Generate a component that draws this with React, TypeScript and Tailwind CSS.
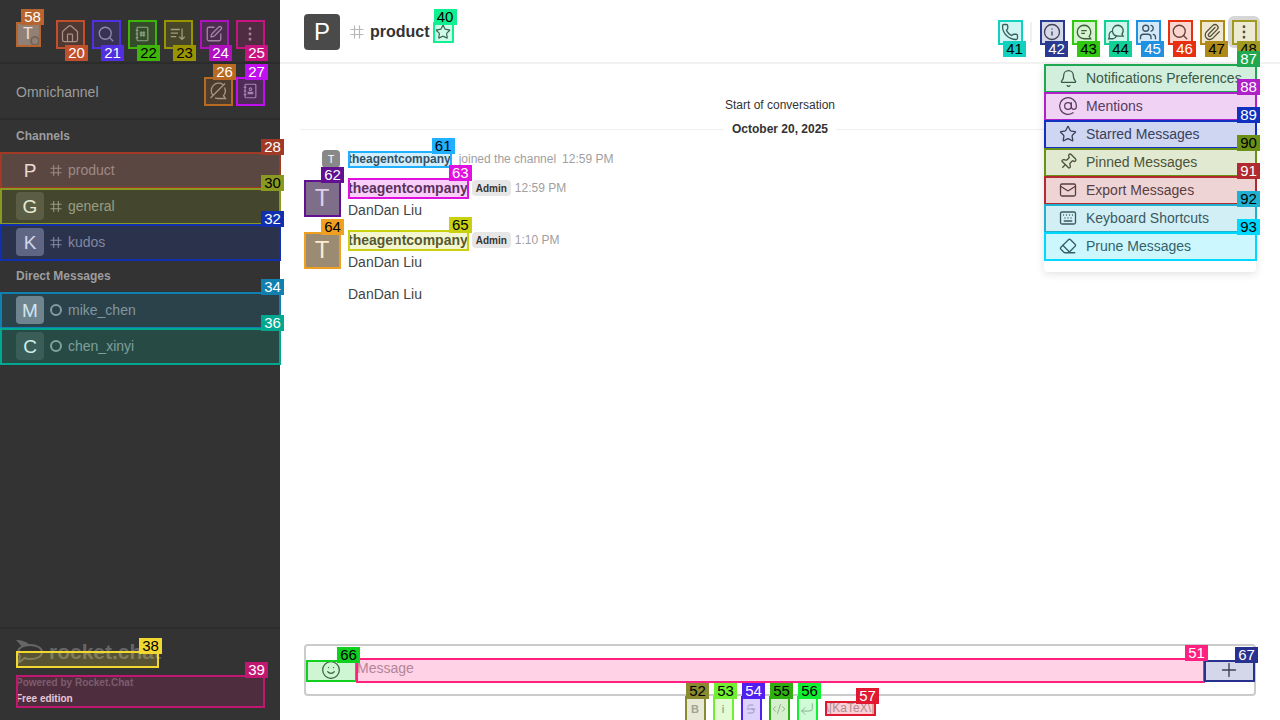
import type { ReactNode } from "react";
import {
  AtSign,
  Bell,
  CodeXml,
  CornerDownLeft,
  EllipsisVertical,
  Eraser,
  House,
  Info,
  Keyboard,
  Mail,
  Paperclip,
  Phone,
  Pin,
  Plus,
  Search,
  Smile,
  SquarePen,
  Star,
  Strikethrough,
  Users,
} from "lucide-react";

// numbered outline that sits over an element, label at its top right corner
function Mark({ n, color, dark, below }: { n: number; color: string; dark?: boolean; below?: boolean }) {
  return (
    <>
      <span
        className="absolute left-0 top-0 -right-px -bottom-px border-2 pointer-events-none"
        style={{ borderColor: color, backgroundColor: color + "33" }}
      />
      <span
        className={
          "absolute -right-[4px] z-30 h-4 w-[23px] text-center text-[15px] font-normal leading-4 " +
          (below ? "top-full -mt-[3px] " : "-top-[13px] ") +
          (dark ? "text-black" : "text-white")
        }
        style={{ backgroundColor: color }}
      >
        {n}
      </span>
    </>
  );
}

const thin = { size: 18, strokeWidth: 1.75 };
const wide = { size: 20, strokeWidth: 1.5 };

function NotebookHash({ contact }: { contact?: boolean }) {
  return (
    <svg width="18" height="18" viewBox="0 0 20 20" fill="none" stroke="currentColor" strokeWidth="1.3">
      <rect x="4.5" y="2.500" width="12" height="15" rx="1" />
      <path d="M3 6h3M3 10h3M3 14h3" />
      {contact ? (
        <>
          <circle cx="10.500" cy="8" r="1.400" />
          <path d="M8 13v-1.500h5V13z" />
        </>
      ) : (
        <path d="M9 7v6M12 7v6M7.500 8.700h6M7.500 11.300h6" />
      )}
    </svg>
  );
}

function SortDown() {
  return (
    <svg width="18" height="18" viewBox="0 0 20 20" fill="none" stroke="currentColor" strokeWidth="1.4">
      <path d="M2 5h10M2 9h8M2 13h6M14.500 4v12M11.500 13l3 3 3-3" />
    </svg>
  );
}

function OmniOff() {
  return (
    <svg width="20" height="20" viewBox="0 0 20 20" fill="none" stroke="currentColor" strokeWidth="1.3">
      <path d="M5 14.500A7.500 7.500 0 0 1 15 3.500M16.500 6.500a7.500 7.500 0 0 1-1 8.200l2 2.800H10a7 7 0 0 1-3-.7M17 2.500 2.500 17" />
    </svg>
  );
}

function Threads() {
  return (
    <svg width="18" height="18" viewBox="0 0 20 20" fill="none" stroke="currentColor" strokeWidth="1.4">
      <path d="M10 2.500a7.500 7.500 0 1 0 0 15h7.500l-1.800-2.700A7.500 7.500 0 0 0 10 2.500z" />
      <path d="M7 8.500h6M7 11.500h4" />
    </svg>
  );
}

function Discussion() {
  return (
    <svg width="18" height="18" viewBox="0 0 20 20" fill="none" stroke="currentColor" strokeWidth="1.4">
      <path d="M12 2.500a6 6 0 0 0-5.800 7.500 6 6 0 0 0 5.800 4.500h6l-1.400-2.200A6 6 0 0 0 12 2.500z" />
      <path d="M6 9a4.500 4.500 0 0 0-3.300 6.300L1.800 17.500H7a4.500 4.500 0 0 0 3.500-3" />
    </svg>
  );
}

function Logo() {
  return (
    <div className="flex h-[25px] items-start gap-[6px] text-[#666666]">
      <svg width="27" height="25" viewBox="0 0 27 25" fill="none" stroke="currentColor" strokeWidth="2">
        <path fill="currentColor" stroke="none" d="M0 0c6 0 11 2 14 5L6 7C4 4 2 2 0 0z" />
        <path d="M14 5c7 0 12 3 12 7 0 4.500-5 7-12 7-2 0-4-.3-5.500-1-2 2-4.500 4-7 5 1.500-2 2.500-4.500 2.300-7C2.500 15 2 13.500 2 12c0-4 5-7 12-7z" />
        <path strokeWidth="1.5" d="M9 12h1M13.500 12h1M18 12h1" />
      </svg>
      <span className="-mt-[1px] text-[21px] font-bold leading-[25px]">rocket.chat</span>
    </div>
  );
}

function SideIcon({ n, color, dark, children, below }: { n: number; color: string; dark?: boolean; below?: boolean; children: ReactNode }) {
  return (
    <div className="relative flex h-7 w-7 items-center justify-center text-[#a0a0a0]">
      {children}
      <Mark n={n} color={color} dark={dark} below={below} />
    </div>
  );
}

function SideRow({
  n,
  color,
  dark,
  letter,
  avatar,
  name,
  dm,
  selected,
}: {
  n: number;
  color: string;
  dark?: boolean;
  letter: string;
  avatar: string;
  name: string;
  dm?: boolean;
  selected?: boolean;
}) {
  return (
    <div className={"relative flex h-9 items-center px-4 " + (selected ? "bg-[#4a4a4a]" : "")}>
      <div
        className="flex h-7 w-7 items-center justify-center rounded text-[19px] leading-none text-white"
        style={{ backgroundColor: avatar }}
      >
        {letter}
      </div>
      <div className="ml-[6px] flex w-[12px] items-center justify-center text-[#a0a0a0]">
        {dm ? (
          <span className="h-3 w-3 rounded-full border-2 border-[#a0a0a0]" />
        ) : (
          <svg width="13" height="13" viewBox="0 0 13 13" fill="none" stroke="currentColor" strokeWidth="1.1">
            <path d="M4 .5v12M9 .5v12M.5 4h12M.5 9h12" />
          </svg>
        )}
      </div>
      <span className="ml-[6px] text-sm text-[#9d9d9d]">{name}</span>
      <Mark n={n} color={color} dark={dark} />
    </div>
  );
}

function Sidebar() {
  return (
    <aside className="relative z-10 flex h-full w-[280px] shrink-0 flex-col bg-[#333333]">
      <div className="flex h-[64px] shrink-0 items-start justify-between border-b-2 border-[#2b2b2b] pl-4 pr-4 pt-[20px]">
        <div className="relative mt-[2px] flex h-6 w-6 items-center justify-center rounded-sm bg-[#888888] text-[16px] leading-none text-white">
          T
          <span className="absolute bottom-0 right-0 h-[10px] w-[10px] rounded-full border-2 border-[#666666]" />
          <Mark n={58} color="#b8642e" />
        </div>
        <div className="flex gap-2">
          <SideIcon n={20} color="#c0502c" below>
            <House {...wide} />
          </SideIcon>
          <SideIcon n={21} color="#5030e0" below>
            <Search {...thin} />
          </SideIcon>
          <SideIcon n={22} color="#3fb50a" dark below>
            <NotebookHash />
          </SideIcon>
          <SideIcon n={23} color="#999400" dark below>
            <SortDown />
          </SideIcon>
          <SideIcon n={24} color="#b010c0" below>
            <SquarePen {...thin} />
          </SideIcon>
          <SideIcon n={25} color="#c81480" below>
            <EllipsisVertical {...thin} />
          </SideIcon>
        </div>
      </div>

      <div className="flex h-[56px] shrink-0 items-center justify-between border-b-2 border-[#2b2b2b] px-4">
        <span className="mt-[2px] text-sm text-[#9d9d9d]">Omnichannel</span>
        <div className="flex gap-1">
          <SideIcon n={26} color="#b86a20">
            <OmniOff />
          </SideIcon>
          <SideIcon n={27} color="#c010f0">
            <NotebookHash contact />
          </SideIcon>
        </div>
      </div>

      <div className="flex h-8 shrink-0 items-center px-4 text-xs font-bold text-[#9d9d9d]">Channels</div>
      <SideRow n={28} color="#a03a25" letter="P" avatar="#4a4a4a" name="product" selected />
      <SideRow n={30} color="#8a9a20" dark letter="G" avatar="#4f4f4f" name="general" />
      <SideRow n={32} color="#1030b0" letter="K" avatar="#737379" name="kudos" />
      <div className="flex h-8 shrink-0 items-center px-4 text-xs font-bold text-[#9d9d9d]">Direct Messages</div>
      <SideRow n={34} color="#1080b0" letter="M" avatar="#868688" name="mike_chen" dm />
      <SideRow n={36} color="#00a890" letter="C" avatar="#4a4a4a" name="chen_xinyi" dm />

      <div className="mt-auto h-[93px] shrink-0 border-t-2 border-[#2b2b2b] px-4 pt-[11px]">
        <Logo />
        <div className="relative -mt-[14px] h-4 w-[142px]">
          <Mark n={38} color="#f0d830" dark />
        </div>
        <div className="relative mt-2 h-8 text-[10px] font-bold leading-4">
          <div className="text-[#6d6d6d]">Powered by Rocket.Chat</div>
          <div className="text-[#f0f0f0]">Free edition</div>
          <Mark n={39} color="#c01870" />
        </div>
      </div>
    </aside>
  );
}

function RoomIcon({ n, color, dark, children }: { n: number; color: string; dark?: boolean; children: ReactNode }) {
  return (
    <div className="relative flex h-6 w-6 items-center justify-center text-[#444444]">
      {children}
      <Mark n={n} color={color} dark={dark} below />
    </div>
  );
}

function RoomHeader() {
  return (
    <header className="flex h-[64px] shrink-0 items-start border-b-2 border-[#f2f2f2] pl-6 pr-6 pt-[14px]">
      <div className="flex h-9 w-9 items-center justify-center rounded bg-[#4a4a4a] text-[24px] leading-none text-white">P</div>
      <svg className="ml-[10px] mt-[11px] text-[#b8b8b8]" width="14" height="14" viewBox="0 0 14 14" fill="none" stroke="currentColor" strokeWidth="1.2">
        <path d="M4.500.5v13M9.500.5v13M.5 4.500h13M.5 9.500h13" />
      </svg>
      <span className="ml-[6px] mt-[8px] text-base font-bold leading-5 text-[#333333]">product</span>
      <div className="relative ml-[3px] mt-[8px] flex h-5 w-5 items-center justify-center text-[#444444]">
        <Star size={16} strokeWidth={1.75} />
        <Mark n={40} color="#10f090" dark />
      </div>

      <div className="ml-auto mt-[6px] flex gap-2">
        <RoomIcon n={41} color="#10d0c0" dark>
          <Phone {...thin} />
        </RoomIcon>
        <span className="my-[2px] h-5 w-[2px] bg-[#f0f0f0]" />
        <RoomIcon n={42} color="#2a3a90">
          <Info {...thin} />
        </RoomIcon>
        <RoomIcon n={43} color="#30c810" dark>
          <Threads />
        </RoomIcon>
        <RoomIcon n={44} color="#10d098" dark>
          <Discussion />
        </RoomIcon>
        <RoomIcon n={45} color="#2090e0">
          <Users {...thin} />
        </RoomIcon>
        <RoomIcon n={46} color="#e83010">
          <Search {...thin} />
        </RoomIcon>
        <RoomIcon n={47} color="#b08a18" dark>
          <Paperclip {...thin} />
        </RoomIcon>
        <div className="relative flex h-6 w-6 items-center justify-center text-[#444444]">
          <span className="absolute -inset-[4px] rounded-md bg-[#d6d6d6]" />
          <span className="absolute inset-0 bg-white" />
          <EllipsisVertical className="relative" {...thin} />
          <Mark n={48} color="#a09a20" dark below />
        </div>
      </div>
    </header>
  );
}

function Name({ n, color, dark, small }: { n: number; color: string; dark?: boolean; small?: boolean }) {
  return (
    <div className={"relative shrink-0 whitespace-nowrap font-bold text-[#3a3a3a] " + (small ? "h-4 text-xs leading-4" : "h-5 text-sm leading-5")}>
      theagentcompany
      <Mark n={n} color={color} dark={dark} />
    </div>
  );
}

function Message({ avatarN, avatarColor, avatarDark, nameN, nameColor, nameDark, time }: { avatarN: number; avatarColor: string; avatarDark?: boolean; nameN: number; nameColor: string; nameDark?: boolean; time: string }) {
  return (
    <div className="flex h-[52px] pl-6 pt-[2px]">
      <div className="relative flex h-9 w-9 shrink-0 items-center justify-center rounded bg-[#868688] text-[24px] leading-none text-white">
        T
        <Mark n={avatarN} color={avatarColor} dark={avatarDark} />
      </div>
      <div className="ml-2 flex flex-col">
        <div className="-mt-[2px] flex h-5 items-center">
          <Name n={nameN} color={nameColor} dark={nameDark} />
          <span className="ml-[4px] flex h-4 w-[39px] items-center justify-center rounded-sm bg-[#e6e6e6] text-[10px] font-bold text-[#333333]">Admin</span>
          <span className="ml-[4px] text-xs text-[#a0a0a0]">{time}</span>
        </div>
        <div className="mt-[2px] h-5 text-sm leading-5 text-[#444444]">DanDan Liu</div>
      </div>
    </div>
  );
}

function MessageList() {
  return (
    <div className="flex-1 overflow-hidden">
      <div className="mt-[33px] text-center text-xs leading-4 text-[#333333]">Start of conversation</div>
      <div className="relative mx-5 mt-[8px] flex h-4 items-center justify-center">
        <span className="absolute inset-x-0 top-[8px] h-px bg-[#f0f0f0]" />
        <span className="relative bg-white px-2 text-xs font-bold text-[#333333]">October 20, 2025</span>
      </div>
      <div className="mt-[13px] flex h-[18px] items-center pl-[42px]">
        <span className="flex h-[18px] w-[18px] items-center justify-center rounded-sm bg-[#888888] text-[11px] text-white">T</span>
        <span className="ml-2">
          <Name n={61} color="#20b0ff" dark small />
        </span>
        <span className="ml-2 text-xs text-[#a0a0a0]">joined the channel</span>
        <span className="ml-[6px] text-xs text-[#a0a0a0]">12:59 PM</span>
      </div>
      <div className="mt-[10px]">
        <Message avatarN={62} avatarColor="#601090" nameN={63} nameColor="#e010e0" time="12:59 PM" />
        <Message avatarN={64} avatarColor="#f0a020" avatarDark nameN={65} nameColor="#c8d010" nameDark time="1:10 PM" />
      </div>
      <div className="ml-[68px] mt-[2px] h-5 text-sm leading-5 text-[#444444]">DanDan Liu</div>
    </div>
  );
}

const menuItems = [
  { n: 87, color: "#20a850", label: "Notifications Preferences", icon: <Bell size={19} strokeWidth={1.6} /> },
  { n: 88, color: "#b020c8", label: "Mentions", icon: <AtSign {...wide} /> },
  { n: 89, color: "#1030c0", label: "Starred Messages", icon: <Star {...thin} /> },
  { n: 90, color: "#6a9018", label: "Pinned Messages", icon: <Pin className="rotate-45" {...thin} />, dark: true },
  { n: 91, color: "#b02a30", label: "Export Messages", icon: <Mail {...thin} /> },
  { n: 92, color: "#20b0d0", label: "Keyboard Shortcuts", icon: <Keyboard {...thin} />, dark: true },
  { n: 93, color: "#00d8ff", label: "Prune Messages", icon: <Eraser {...thin} />, dark: true },
];

function RoomMenu() {
  return (
    <div className="absolute right-6 top-[64px] z-40 h-[208px] w-[212px] rounded-b bg-white shadow-[0_2px_8px_rgba(0,0,0,0.12)]">
      {menuItems.map((item) => (
        <div key={item.n} className="relative flex h-7 items-center text-[#444444]">
          <span className="flex w-[42px] justify-center pl-[6px]">{item.icon}</span>
          <span className="text-sm">{item.label}</span>
          <Mark n={item.n} color={item.color} dark={item.dark} />
        </div>
      ))}
    </div>
  );
}

function Composer() {
  return (
    <div className="shrink-0 px-6">
      <div className="flex h-[52px] items-center rounded border-2 border-[#cbcbcb]">
        <div className="relative flex h-[21px] w-[50px] shrink-0 items-center justify-center text-[#444444]">
          <Smile {...wide} />
          <Mark n={66} color="#10d020" dark />
        </div>
        <div className="relative h-6 flex-1 pl-px text-sm leading-5 text-[#a0a0a0]">
          Message
          <Mark n={51} color="#ff2080" />
        </div>
        <div className="relative flex h-[21px] w-[50px] shrink-0 items-center justify-center text-[#444444]">
          <Plus size={22} strokeWidth={1.5} />
          <Mark n={67} color="#283090" />
        </div>
      </div>
      <div className="flex h-6 justify-center gap-2 text-[#a8a8a8]">
        <ToolButton n={52} color="#8a8a30" dark>
          <span className="text-[11px] font-bold leading-none">B</span>
        </ToolButton>
        <ToolButton n={53} color="#70f030" dark>
          <span className="text-[11px] font-bold leading-none">i</span>
        </ToolButton>
        <ToolButton n={54} color="#5020f0">
          <Strikethrough size={12} strokeWidth={1.75} />
        </ToolButton>
        <ToolButton n={55} color="#30b010" dark>
          <CodeXml size={14} strokeWidth={1.5} />
        </ToolButton>
        <ToolButton n={56} color="#10f030" dark>
          <CornerDownLeft size={16} strokeWidth={1.5} />
        </ToolButton>
        <div className="relative mt-[5px] h-[14px] w-[50px] text-center text-xs leading-[14px]">
          \[KaTeX\]
          <Mark n={57} color="#e01830" />
        </div>
      </div>
    </div>
  );
}

function ToolButton({ n, color, dark, children }: { n: number; color: string; dark?: boolean; children: ReactNode }) {
  return (
    <div className="relative flex h-[26px] w-5 items-center justify-center">
      {children}
      <Mark n={n} color={color} dark={dark} />
    </div>
  );
}

export default function App() {
  return (
    <div className="flex h-screen w-full overflow-hidden bg-white font-['Liberation_Sans',Arial,sans-serif]">
      <Sidebar />
      <main className="relative flex h-full min-w-0 flex-1 flex-col">
        <RoomHeader />
        <MessageList />
        <RoomMenu />
        <Composer />
      </main>
    </div>
  );
}
